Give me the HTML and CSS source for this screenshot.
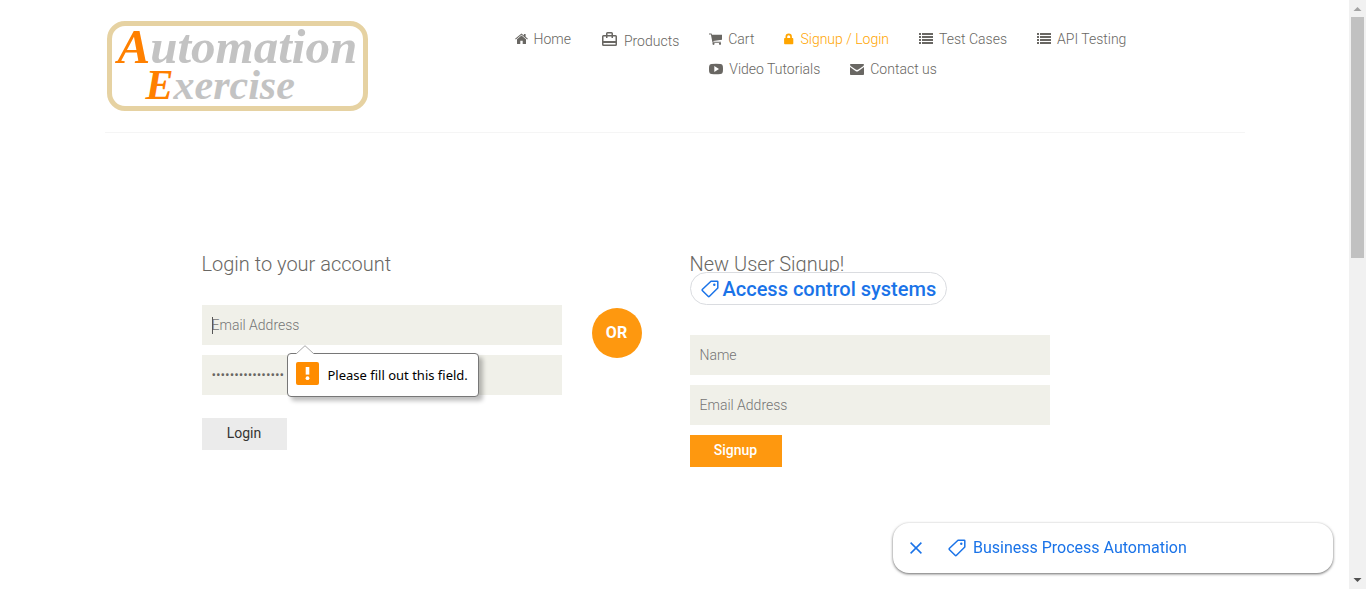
FILE: index.html
```html
<!DOCTYPE html>
<html lang="en">
<head>
<meta charset="utf-8">
<title>Automation Exercise - Signup / Login</title>
<link rel="stylesheet" href="styles.css">
</head>
<body>
<svg class="defs" width="0" height="0" aria-hidden="true">
  <symbol id="home" viewBox="0 0 13 12"><path d="M6.5 2.6 11 6.3V10.5a.5.5 0 0 1-.5.5H7.7V7.8H5.3V11H2.5a.5.5 0 0 1-.5-.5V6.3z"/><path d="M6.5.4 8.9 2.4V.9h1.7v2.9l2.3 1.9-.7.9L6.5 1.8.8 6.6l-.7-.9z"/></symbol>
  <symbol id="bag" viewBox="0 0 17 17"><path fill-rule="evenodd" d="M5 4V2.500Q5 1 6.500 1h4Q12 1 12 2.500V4h2.500Q16 4 16 5.500v8q0 1.500-1.500 1.500h-12Q1 15 1 13.500v-8Q1 4 2.500 4zM6.500 2.500V4h4V2.500zM2.500 5.500V10h12V5.500H12V7h-1.500V5.500h-4V7H5V5.500zM2.500 12v1.500h12V12z"/></symbol>
  <symbol id="cart" viewBox="0 0 13 12"><path d="M0 .5h2.500l.5 1.200H13V6.800L4.300 7.900l.2.800h7.400v1H3.500L1.900 1.500H0z"/><circle cx="4.500" cy="10.800" r="1.100"/><circle cx="11" cy="10.800" r="1.100"/></symbol>
  <symbol id="lock" viewBox="0 0 10 12"><path d="M1.500 5V3.800a3.200 3.200 0 0 1 6.400 0V5h.6c.4 0 .8.300.8.800v4.700c0 .4-.4.700-.8.700H.9c-.5 0-.8-.3-.8-.7V5.800c0-.5.3-.8.800-.8zm1.700 0h3V3.800a1.500 1.500 0 0 0-3 0z"/></symbol>
  <symbol id="list" viewBox="0 0 14 12"><path d="M0 0h2v2H0zM3 0h11v2H3zM0 3h2v2H0zM3 3h11v2H3zM0 6h2v2H0zM3 6h11v2H3zM0 9h2v2H0zM3 9h11v2H3z"/></symbol>
  <symbol id="video" viewBox="0 0 14 12"><path fill-rule="evenodd" d="M2.500 1Q7 .5 11.500 1 13.500 1.100 13.800 3 14.200 6 13.800 9 13.500 10.900 11.500 11 7 11.400 2.500 11 .5 10.900.2 9-.2 6 .2 3 .5 1.100 2.500 1zM5.300 3v6L10 6z"/></symbol>
  <symbol id="mail" viewBox="0 0 14 12"><path d="M0 4.100 5.500 8q1.500 1 3 0L14 4.100v7.100c0 .5-.4.800-.8.800H.8c-.4 0-.8-.3-.8-.8zM.8 1h12.400c.6 0 .8.400.8.800 0 .6-.4 1-.9 1.400L8.300 6.600q-1.300.9-2.600 0L.9 3.200C.4 2.800 0 2.400 0 1.800 0 1.400.3 1 .8 1z"/></symbol>
  <symbol id="tag" viewBox="0 0 18 18"><path fill="none" stroke="currentColor" stroke-width="1.500" stroke-linejoin="round" d="M10 1.200h6.200q.6 0 .6.600V8L8.500 16.300q-.7.700-1.400 0L1.500 10.700q-.7-.7 0-1.400z"/><circle cx="13.300" cy="4.700" r="1.200"/></symbol>
  <symbol id="close" viewBox="0 0 12 12"><path fill="none" stroke="currentColor" stroke-width="1.500" d="m.6.600 10.800 10.800M11.400.6.600 11.400"/></symbol>
</svg>

<header class="header">
  <a class="logo" href="#"><span class="logo-first"><b>A</b>utomation</span><span class="logo-second"><b>E</b>xercise</span></a>
  <nav class="nav">
    <ul class="nav-list">
      <li><a href="#"><svg width="13" height="12"><use href="#home"/></svg>Home</a></li>
      <li class="products"><a href="#"><svg width="17" height="17"><use href="#bag"/></svg><span>Products</span></a></li>
      <li><a href="#"><svg width="13" height="12"><use href="#cart"/></svg>Cart</a></li>
      <li><a class="active" href="#"><svg width="10" height="12"><use href="#lock"/></svg>Signup / Login</a></li>
      <li><a href="#"><svg width="14" height="12"><use href="#list"/></svg>Test Cases</a></li>
      <li><a href="#"><svg width="14" height="12"><use href="#list"/></svg>API Testing</a></li>
      <li><a href="#"><svg width="14" height="12"><use href="#video"/></svg>Video Tutorials</a></li>
      <li><a href="#"><svg width="14" height="12"><use href="#mail"/></svg>Contact us</a></li>
    </ul>
  </nav>
</header>

<main class="account">
  <form class="form login">
    <h2>Login to your account</h2>
    <div class="field">
      <input type="email" placeholder="Email Address" aria-label="Email Address">
      <span class="caret"></span>
      <div class="bubble" role="alert">
        <svg class="bubble-arrow" width="18" height="9" viewBox="0 0 18 9"><path d="M0 9 9 .7 18 9" fill="#fff" stroke="#a8a8a8"/></svg>
        <span class="bubble-icon"><svg width="23" height="23" viewBox="0 0 23 23"><path d="M9.700 5h3.600v7.600H9.700z"/><circle cx="11.500" cy="16.200" r="1.900"/></svg></span>
        <span>Please fill out this field.</span>
      </div>
    </div>
    <input type="password" value="automationexerci" aria-label="Password">
    <button class="button login-button" type="button">Login</button>
  </form>
  <div class="or">OR</div>
  <form class="form signup">
    <h2>New User Signup!</h2>
    <a class="chip" href="#"><svg width="18" height="18"><use href="#tag"/></svg>Access control systems</a>
    <input type="text" placeholder="Name" aria-label="Name">
    <input type="email" placeholder="Email Address" aria-label="Signup email address">
    <button class="button signup-button" type="button">Signup</button>
  </form>
</main>

<aside class="anchor-bar">
  <button class="close" type="button" aria-label="Close"><svg width="12" height="12"><use href="#close"/></svg></button>
  <a href="#"><svg width="18" height="18"><use href="#tag"/></svg>Business Process Automation</a>
</aside>

<div class="scrollbar" aria-hidden="true">
  <svg width="17" height="17"><path d="M4.500 11h8l-4-4z" fill="#a3a3a3"/></svg>
  <div class="track"><div class="thumb"></div></div>
  <svg width="17" height="17"><path d="M4.500 6h8l-4 4z" fill="#505050"/></svg>
</div>
</body>
</html>
```
FILE: styles.css
```css
* { box-sizing: border-box; }
html { overflow: hidden; }
body {
  margin: 0;
  padding-right: 17px;
  min-height: 100vh;
  background: #fff;
  color: #696763;
  font: 300 14px/20px Roboto, sans-serif;
}
a { color: inherit; text-decoration: none; }
svg { fill: currentColor; flex: none; }
.defs { position: absolute; }

.header {
  display: flex;
  justify-content: space-between;
  max-width: 1140px;
  margin: 0 auto;
  padding: 21px 0;
  border-bottom: 1px solid #f5f5f5;
}
.logo {
  display: flex;
  flex-direction: column;
  width: 261px;
  height: 90px;
  margin-left: 2px;
  padding: 2px 6px;
  border: 5px solid #e6d2a2;
  border-radius: 18px;
  color: #c3c3c3;
  font: italic 700 42px/38px "Liberation Serif", serif;
  white-space: nowrap;
}
.logo b { color: #ff8000; }
.logo-first { font-size: 49px; }
.logo-second { padding-left: 28px; }
.nav { width: 760px; }
.nav-list { margin: 0; padding: 3px 0 0; list-style: none; }
.nav-list li { float: left; height: 30px; padding-left: 30px; }
.nav-list a { display: flex; align-items: center; gap: 6px; height: 30px; }
.nav-list .products { height: 32px; }
.products span { padding-top: 4px; }
.nav-list .active { color: #ffa500; }

.account {
  display: grid;
  grid-template-columns: minmax(0, 360px) 50px minmax(0, 360px);
  column-gap: 30px;
  max-width: 1140px;
  margin: 0 auto;
  padding: 119px 97px 0;
}
.form h2 { margin: 0; font-size: 20px; line-height: 24px; font-weight: 300; }
.form input {
  display: block;
  width: 100%;
  height: 40px;
  margin: 0 0 10px;
  padding: 0 10px;
  border: 0;
  border-radius: 0;
  background: #f0f0e9;
  color: #696763;
  font: 300 14px/20px Roboto, sans-serif;
}
.form input::placeholder { color: #757575; }
.login h2 { margin-bottom: 29px; }
.field { position: relative; }
.caret { position: absolute; left: 10px; top: 12px; width: 1px; height: 17px; background: #555; }
.button { display: block; height: 32px; border: 0; font: 400 14px/20px Roboto, sans-serif; }
.login-button { width: 85px; margin-top: 23px; padding: 0 0 2px; background: #ebebeb; color: #363432; }
.signup-button { width: 92px; padding: 0 0 2px; background: #fe980f; color: #fff; font-weight: 500; }
.bubble {
  position: absolute;
  left: 85px;
  top: 48px;
  display: flex;
  align-items: center;
  gap: 9px;
  height: 44px;
  padding: 0 10px 0 8px;
  border: 1px solid #777;
  border-radius: 4px;
  background: #fff;
  box-shadow: 4px 4px 4px rgba(0, 0, 0, .25);
  color: #000;
  font: 400 13px/20px "Noto Sans", sans-serif;
  white-space: nowrap;
}
.bubble-arrow { position: absolute; left: 8px; top: -9px; }
.bubble-icon { display: flex; margin-bottom: 4px; border-radius: 2px; background: #ff8c00; color: #fff; }
.or {
  width: 50px;
  height: 50px;
  margin-top: 56px;
  border-radius: 50%;
  background: #fe980f;
  color: #fff;
  font: 700 16px/50px Roboto, sans-serif;
  text-align: center;
}
.signup { margin-left: 18px; margin-right: -18px; }
.chip {
  position: relative;
  display: flex;
  align-items: center;
  gap: 4px;
  width: fit-content;
  height: 33px;
  margin: -4px 0 30px;
  padding: 0 10px;
  border: 1px solid #dadce0;
  border-radius: 17px;
  background: #fff;
  box-shadow: inset 0 0 0 1px #fff;
  color: #1a73e8;
  font-size: 20px;
  font-weight: 500;
}

.anchor-bar {
  position: fixed;
  right: 33px;
  bottom: 16px;
  display: flex;
  align-items: center;
  gap: 26px;
  width: 440px;
  height: 50px;
  padding: 0 17px;
  border-radius: 16px;
  background: #fff;
  box-shadow: 0 1px 3px rgba(0, 0, 0, .6);
  color: #1a73e8;
  font: 400 16px/24px Roboto, sans-serif;
}
.anchor-bar a { display: flex; align-items: center; gap: 7px; }
.close { display: flex; padding: 0; border: 0; background: none; color: inherit; }

.scrollbar {
  position: fixed;
  top: 0;
  right: 0;
  bottom: 0;
  display: flex;
  flex-direction: column;
  width: 17px;
  background: #f1f1f1;
}
.track { flex: 1; padding: 0 2px; }
.thumb { height: 241px; background: #c1c1c1; }
```
